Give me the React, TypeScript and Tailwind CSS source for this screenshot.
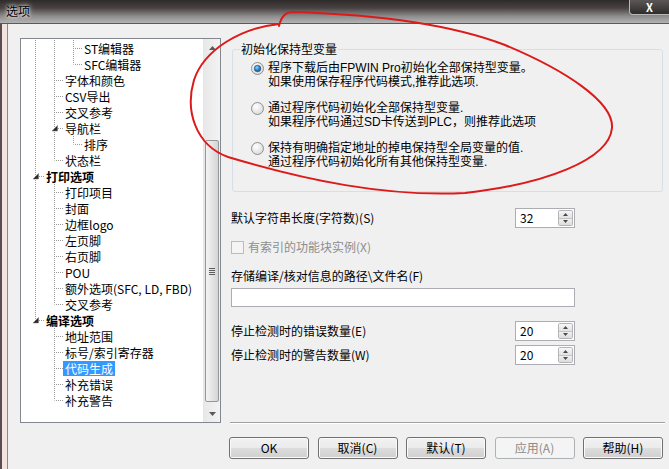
import React from 'react';

type Row = {
    text: string;
    guides: string[];
    bold?: boolean;
    expander?: boolean;
    selected?: boolean;
};

const rows: Row[] = [
    { text: 'ST编辑器', guides: ['v', 'v', 't'] },
    { text: 'SFC编辑器', guides: ['v', 'v', 'l'] },
    { text: '字体和颜色', guides: ['v', 't'] },
    { text: 'CSV导出', guides: ['v', 't'] },
    { text: '交叉参考', guides: ['v', 't'] },
    { text: '导航栏', guides: ['v', 't'], expander: true },
    { text: '排序', guides: ['v', 'v', 'l'] },
    { text: '状态栏', guides: ['v', 'l'] },
    { text: '打印选项', guides: ['t'], bold: true, expander: true },
    { text: '打印项目', guides: ['v', 't'] },
    { text: '封面', guides: ['v', 't'] },
    { text: '边框logo', guides: ['v', 't'] },
    { text: '左页脚', guides: ['v', 't'] },
    { text: '右页脚', guides: ['v', 't'] },
    { text: 'POU', guides: ['v', 't'] },
    { text: '额外选项(SFC, LD, FBD)', guides: ['v', 't'] },
    { text: '交叉参考', guides: ['v', 'l'] },
    { text: '编译选项', guides: ['l'], bold: true, expander: true },
    { text: '地址范围', guides: [' ', 't'] },
    { text: '标号/索引寄存器', guides: [' ', 't'] },
    { text: '代码生成', guides: [' ', 't'], selected: true },
    { text: '补充错误', guides: [' ', 't'] },
    { text: '补充警告', guides: [' ', 'l'] },
];

function Guide({ kind, expander }: { kind: string; expander?: boolean }) {
    const dot = { stroke: '#9a9a9a', strokeDasharray: '1 1', strokeWidth: 1 };
    return (
        <svg width="19" height="16" className="shrink-0">
            {(kind === 'v' || kind === 't') && <line x1="10.5" y1="0" x2="10.5" y2="16" {...dot} />}
            {kind === 'l' && <line x1="10.5" y1="0" x2="10.5" y2="8.5" {...dot} />}
            {(kind === 't' || kind === 'l') && <line x1="12" y1="8.5" x2="19" y2="8.5" {...dot} />}
            {expander && <polygon points="13.5,5.5 13.5,11 8,11" fill="#2a2a2a" stroke="#777" strokeWidth="0.5" />}
        </svg>
    );
}

function TreeView() {
    return (
        <div className="mt-[14px] flex h-[385px] w-[201px] border border-[#828790] bg-white">
            <div className="flex-1 overflow-hidden pl-[4px] pt-[1px]">
                {rows.map((r, i) => (
                    <div key={i} className="flex h-[16px] items-center">
                        {r.guides.map((g, j) => (
                            <Guide key={j} kind={g} expander={j === r.guides.length - 1 && r.expander} />
                        ))}
                        <span
                            className={`whitespace-nowrap px-[2px] leading-[15px] ${r.bold ? 'font-bold' : ''} ${r.selected ? 'bg-[#3399ff] text-white' : 'text-black'}`}
                        >
                            {r.text}
                        </span>
                    </div>
                ))}
            </div>

            {/* scrollbar */}
            <div className="flex w-[17px] flex-col border-l border-[#e6e6e6] bg-[linear-gradient(to_right,#e8e8e8,#f3f3f3)]">
                <div className="flex h-[17px] items-center justify-center">
                    <svg width="7" height="4"><polygon points="0,4 3.5,0 7,4" fill="#5a5a5a" /></svg>
                </div>
                <div className="h-[84px]" />
                <div className="mx-[1px] flex h-[262px] items-center justify-center rounded-[2px] border border-[#979797] bg-[linear-gradient(to_right,#f4f4f4,#e6e6e6_45%,#d4d4d4)]">
                    <div className="flex flex-col gap-[1px]">
                        <div className="h-[1px] w-[6px] bg-[#5e5e5e]" />
                        <div className="h-[1px] w-[6px] bg-[#5e5e5e]" />
                        <div className="h-[1px] w-[6px] bg-[#5e5e5e]" />
                        <div className="h-[1px] w-[6px] bg-[#5e5e5e]" />
                    </div>
                </div>
                <div className="flex-1" />
                <div className="flex h-[17px] items-center justify-center">
                    <svg width="7" height="4"><polygon points="0,0 7,0 3.5,4" fill="#5a5a5a" /></svg>
                </div>
            </div>
        </div>
    );
}

function Radio({ checked }: { checked?: boolean }) {
    return (
        <svg width="13" height="13" className="mt-[1px] shrink-0">
            <defs>
                <radialGradient id="rb" cx="40%" cy="35%" r="70%">
                    <stop offset="0%" stopColor="#ffffff" />
                    <stop offset="100%" stopColor="#d8d8d8" />
                </radialGradient>
                <radialGradient id="rd" cx="40%" cy="35%" r="70%">
                    <stop offset="0%" stopColor="#8fd3ff" />
                    <stop offset="60%" stopColor="#2d7bbd" />
                    <stop offset="100%" stopColor="#1c4f7c" />
                </radialGradient>
            </defs>
            <circle cx="6.5" cy="6.5" r="6" fill="url(#rb)" stroke="#8e8f8f" />
            {checked && <circle cx="6.5" cy="6.5" r="3.3" fill="url(#rd)" stroke="#1f4e79" strokeWidth="0.6" />}
        </svg>
    );
}

function Spin({ value }: { value: string }) {
    return (
        <div className="flex h-[20px] w-[60px] border border-[#abadb3] bg-white">
            <div className="flex-1 pl-[4px] leading-[18px]">{value}</div>
            <div className="my-[1px] mr-[1px] flex w-[15px] flex-col overflow-hidden rounded-[2px] border border-[#b4b4b4]">
                <div className="flex flex-1 items-center justify-center border-b border-[#c4c4c4] bg-[linear-gradient(to_bottom,#f6f6f6,#e2e2e2)]">
                    <svg width="5" height="3"><polygon points="0,3 2.5,0 5,3" fill="#4a4a4a" /></svg>
                </div>
                <div className="flex flex-1 items-center justify-center bg-[linear-gradient(to_bottom,#f0f0f0,#dcdcdc)]">
                    <svg width="5" height="3"><polygon points="0,0 5,0 2.5,3" fill="#4a4a4a" /></svg>
                </div>
            </div>
        </div>
    );
}

function Button({ label, disabled }: { label: string; disabled?: boolean }) {
    return (
        <div
            className={`flex h-[22px] w-[80px] items-center justify-center rounded-[3px] border ${
                disabled
                    ? 'border-[#adb2b5] bg-[#f4f4f4] text-[#8b8b8b]'
                    : 'border-[#707070] bg-[linear-gradient(to_bottom,#f2f2f2_0%,#ebebeb_48%,#dddddd_52%,#cfcfcf_100%)] text-black shadow-[inset_0_0_0_1px_#fbfbfb]'
            }`}
        >
            {label}
        </div>
    );
}

const options = [
    ['程序下载后由FPWIN Pro初始化全部保持型变量。', '如果使用保存程序代码模式,推荐此选项.'],
    ['通过程序代码初始化全部保持型变量.', '如果程序代码通过SD卡传送到PLC，则推荐此选项'],
    ['保持有明确指定地址的掉电保持型全局变量的值.', '通过程序代码初始化所有其他保持型变量.'],
];

export default function App() {
    return (
        <div className="relative h-[469px] w-[669px] overflow-hidden bg-[#f0f0f0] font-['Noto_Sans_CJK_SC',sans-serif] text-[12px] text-black">
            {/* title bar */}
            <div className="flex h-[24px] items-start justify-between border-b border-[#5a5a5a] bg-[linear-gradient(to_bottom,#2f2a2a_0%,#4a4242_35%,#8d8b8b_70%,#b3b3b3_100%)]">
                <span className="ml-[6px] mt-[3px] leading-[16px] text-black [text-shadow:0_0_6px_#ffffff,0_0_3px_#ffffff]">选项</span>
                <div className="flex h-[15px] w-[40px] items-center justify-center rounded-bl-[4px] border-b border-l border-[#b9b9b9] bg-[linear-gradient(to_bottom,#5c5757,#2f2c2c)]">
                    <span className="text-[11px] font-bold leading-[11px] text-white">X</span>
                </div>
            </div>

            <div className="flex h-[445px]">
                {/* window frame */}
                <div className="w-[2px] bg-[#5a4d4d]" />
                <div className="w-[5px] bg-[#f3e4e0]" />
                <div className="w-[1px] bg-[#8a8a8a]" />

                <div className="flex flex-1 pl-[12px]">
                    <TreeView />

                    <div className="ml-[8px] flex w-[436px] flex-col">
                        <fieldset className="ml-[3px] mt-[17px] h-[151px] w-[431px] rounded-[3px] border border-[#d5dfe5] pl-[18px]">
                            <legend className="-ml-[11px] px-[1px] leading-[16px]">初始化保持型变量</legend>
                            <div className="mt-[4px] flex flex-col gap-[12px]">
                                {options.map((o, i) => (
                                    <div key={i} className="flex items-start gap-[4px]">
                                        <Radio checked={i === 0} />
                                        <p className="font-['Liberation_Sans','Noto_Sans_CJK_SC',sans-serif] leading-[14px]">
                                            {o[0]}
                                            <br />
                                            {o[1]}
                                        </p>
                                    </div>
                                ))}
                            </div>
                        </fieldset>

                        <div className="mt-[16px] flex w-[346px] items-center justify-between pl-[2px]">
                            <span>默认字符串长度(字符数)(S)</span>
                            <Spin value="32" />
                        </div>

                        <div className="ml-[2px] mt-[12px] flex items-center gap-[4px]">
                            <div className="h-[13px] w-[13px] border border-[#bcbcbc] bg-[#f4f4f4]" />
                            <span className="leading-[14px] text-[#8d8d8d]">有索引的功能块实例(X)</span>
                        </div>

                        <div className="ml-[2px] mt-[14px] leading-[16px]">存储编译/核对信息的路径\文件名(F)</div>
                        <div className="ml-[2px] mt-[4px] h-[19px] w-[344px] border border-[#abadb3] bg-white" />

                        <div className="mt-[14px] flex w-[346px] items-center justify-between pl-[2px]">
                            <span>停止检测时的错误数量(E)</span>
                            <Spin value="20" />
                        </div>
                        <div className="mt-[4px] flex w-[346px] items-center justify-between pl-[2px]">
                            <span>停止检测时的警告数量(W)</span>
                            <Spin value="20" />
                        </div>

                        <div className="ml-[1px] mt-[57px] h-[2px] w-[435px] border-t border-b border-t-[#a0a0a0] border-b-white" />

                        <div className="mt-[13px] flex gap-[8.5px]">
                            <Button label="OK" />
                            <Button label="取消(C)" />
                            <Button label="默认(T)" />
                            <Button label="应用(A)" disabled />
                            <Button label="帮助(H)" />
                        </div>
                    </div>
                </div>
            </div>

            {/* red hand-drawn annotation */}
            <svg className="pointer-events-none absolute left-0 top-0" width="669" height="469">
                <path
                    d="M 279 26 C 281 17, 285 12, 293 12 C 360 14, 445 22, 505 45 C 565 70, 614 102, 612 128 C 609 160, 545 184, 465 193 C 385 197, 305 180, 228 157 C 195 145, 185 110, 194 80 C 204 50, 240 28, 279 24"
                    fill="none"
                    stroke="#dc1a1a"
                    strokeWidth="2"
                    strokeLinecap="round"
                />
            </svg>
        </div>
    );
}
